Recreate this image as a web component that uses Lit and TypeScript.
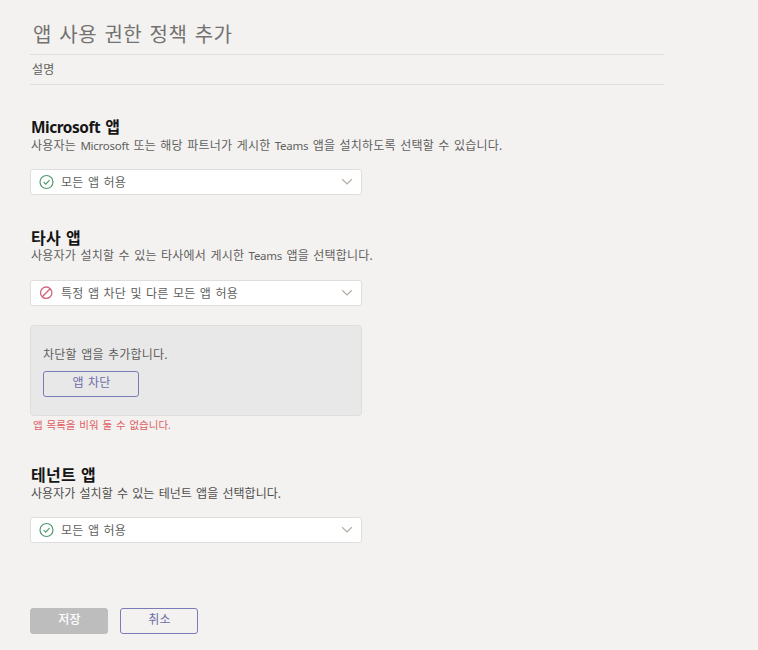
import { LitElement, html, css, svg } from "lit";
import { customElement, property } from "lit/decorators.js";

@customElement("policy-select")
class PolicySelect extends LitElement {
  @property() kind: "allow" | "block" = "allow";
  @property() label = "";

  static styles = css`
    :host {
      display: block;
    }
    .box {
      box-sizing: border-box;
      display: flex;
      align-items: center;
      width: 332px;
      height: 26px;
      padding: 0 8px;
      border: 1px solid #dfdedd;
      border-radius: 3px;
      background: #fff;
    }
    .icon {
      flex: none;
      width: 16px;
      height: 16px;
      margin-right: 6px;
    }
    .label {
      flex: 1;
      padding-top: 1px;
      line-height: 23px;
    }
    .chevron {
      flex: none;
      width: 12px;
      height: 8px;
    }
  `;

  render() {
    const glyph =
      this.kind === "allow"
        ? svg`<circle cx="7.5" cy="8" r="6.5" stroke="#4f9a70" stroke-width="1.2"/><path d="M4.6 8.1 6.8 10.2 10.5 6.2" stroke="#4f9a70" stroke-width="1.2"/>`
        : svg`<circle cx="7.2" cy="7.7" r="5.7" stroke="#d0637a" stroke-width="1.3"/><path d="M3.3 11.7 11.1 3.7" stroke="#d0637a" stroke-width="1.3"/>`;
    return html`<div class="box">
      <svg class="icon" viewBox="0 0 16 16" fill="none">${glyph}</svg>
      <span class="label">${this.label}</span>
      <svg class="chevron" viewBox="0 0 12 8" fill="none">
        <path d="M1.2 1.3 6 6 10.8 1.3" stroke="#b3aca5" stroke-width="1.2" />
      </svg>
    </div>`;
  }
}

@customElement("app-root")
class AppRoot extends LitElement {
  static styles = css`
    :host {
      display: block;
      box-sizing: border-box;
      height: 650px;
      padding: 15px 0 0 30px;
      background: #f3f2f0;
      color: #605f5e;
      font-family: "Noto Sans", "Noto Sans CJK KR", sans-serif;
      font-size: 12px;
      line-height: 18px;
      letter-spacing: 0.21px;
      word-spacing: 1.05px;
      white-space: nowrap;
      overflow: hidden;
    }
    .title {
      box-sizing: border-box;
      width: 634px;
      height: 40px;
      margin: 0;
      padding: 1px 0 0 3px;
      border-bottom: 1px solid #dfdedd;
      color: #737271;
      font-size: 20px;
      font-weight: 400;
      line-height: 38px;
      letter-spacing: 0.45px;
      word-spacing: 1.8px;
    }
    .caption {
      box-sizing: border-box;
      width: 634px;
      height: 30px;
      padding-left: 2px;
      border-bottom: 1px solid #dfdedd;
      line-height: 29px;
    }
    .section {
      height: 78px;
      margin-top: 32px;
    }
    .section.third-party {
      height: 189px;
      margin-top: 33px;
    }
    .section.tenant {
      margin-top: 48px;
    }
    .heading {
      margin: 0;
      padding-left: 1px;
      color: #151515;
      font-size: 16px;
      font-weight: 700;
      line-height: 20px;
      letter-spacing: 0.3px;
      word-spacing: 0.6px;
    }
    .latin {
      line-height: 0;
    }
    .heading .latin {
      font-size: 15.4px;
      letter-spacing: -0.45px;
    }
    .description {
      margin: 0;
      padding: 0 0 14px 1px;
    }
    .description .latin {
      font-size: 11.5px;
      letter-spacing: -0.25px;
    }
    .third-party .description {
      margin-top: -1px;
      padding-bottom: 15px;
    }
    .tenant .description {
      color: #4f4e4d;
      letter-spacing: 0.04px;
    }
    .panel {
      box-sizing: border-box;
      width: 332px;
      height: 91px;
      margin-top: 19px;
      padding: 20px 12px 0;
      border: 1px solid #dfdedd;
      border-radius: 4px;
      background: #e8e8e8;
    }
    .button {
      box-sizing: border-box;
      height: 26px;
      padding: 0 0 2px;
      border: 1px solid #7a7bb8;
      border-radius: 3px;
      background: transparent;
      color: #6d6ea8;
      font: inherit;
      line-height: 22px;
      letter-spacing: inherit;
      word-spacing: inherit;
      text-align: center;
    }
    .add {
      display: block;
      width: 96px;
      margin-top: 7px;
      padding-left: 1px;
    }
    .error {
      margin-top: 1px;
      padding-left: 3px;
      color: #df5e63;
      font-size: 10.5px;
      line-height: 16px;
      letter-spacing: 0;
      word-spacing: 1.1px;
    }
    .actions {
      display: flex;
      gap: 12px;
      margin-top: 65px;
    }
    .action {
      width: 78px;
      padding-left: 1px;
    }
    .action.save {
      border-color: #bdbdbd;
      background: #bdbdbd;
      color: #fff;
      font-weight: 500;
    }
  `;

  render() {
    return html`
      <h1 class="title">앱 사용 권한 정책 추가</h1>
      <div class="caption">설명</div>
      <section class="section">
        <h2 class="heading"><span class="latin">Microsoft</span> 앱</h2>
        <p class="description">사용자는 <span class="latin">Microsoft</span> 또는 해당 파트너가 게시한 <span class="latin">Teams</span> 앱을 설치하도록 선택할 수 있습니다.</p>
        <policy-select kind="allow" label="모든 앱 허용"></policy-select>
      </section>
      <section class="section third-party">
        <h2 class="heading">타사 앱</h2>
        <p class="description">사용자가 설치할 수 있는 타사에서 게시한 <span class="latin">Teams</span> 앱을 선택합니다.</p>
        <policy-select kind="block" label="특정 앱 차단 및 다른 모든 앱 허용"></policy-select>
        <div class="panel">
          <div>차단할 앱을 추가합니다.</div>
          <button class="button add">앱 차단</button>
        </div>
        <div class="error">앱 목록을 비워 둘 수 없습니다.</div>
      </section>
      <section class="section tenant">
        <h2 class="heading">테넌트 앱</h2>
        <p class="description">사용자가 설치할 수 있는 테넌트 앱을 선택합니다.</p>
        <policy-select kind="allow" label="모든 앱 허용"></policy-select>
      </section>
      <div class="actions">
        <button class="button action save">저장</button>
        <button class="button action">취소</button>
      </div>
    `;
  }
}
